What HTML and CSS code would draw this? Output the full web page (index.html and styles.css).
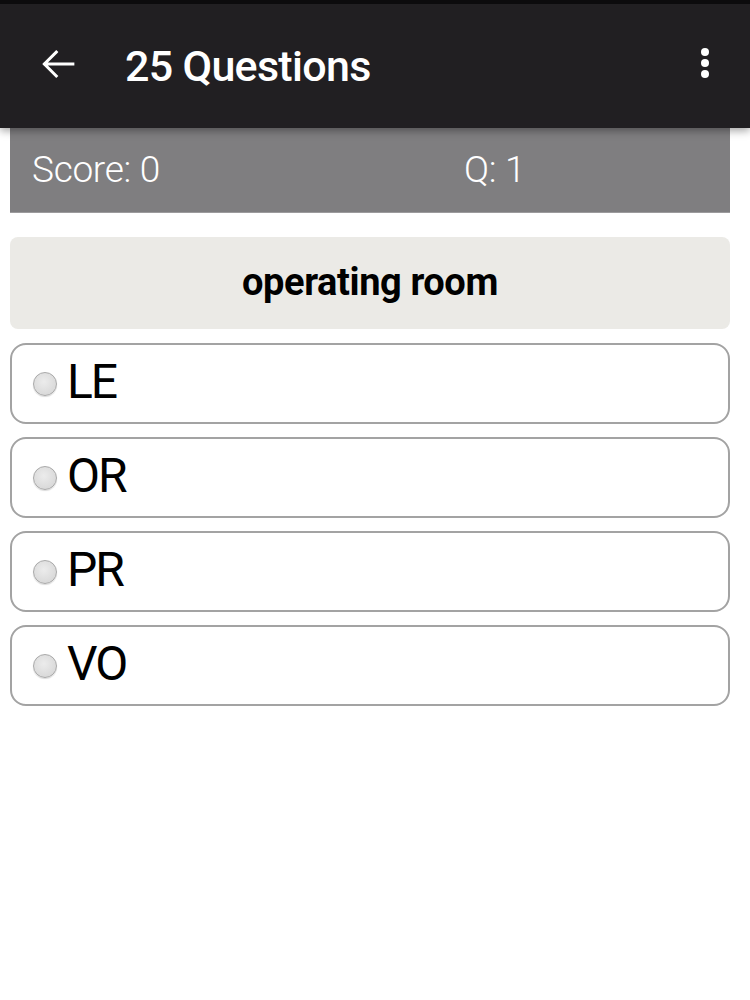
FILE: index.html
```html
<!DOCTYPE html>
<html>
  <head>
    <meta charset="UTF-8">
    <title>25 Questions</title>
    <link rel="stylesheet" href="styles.css">
  </head>
  <body>
    <div class="app-bar">
      <div class="back-btn">
        <svg width="42" height="42" viewBox="0 0 24 24">
          <path d="M20.5 12H4.5M11 5.2l-6.8 6.8 6.8 6.8" fill="none" stroke="#fff" stroke-width="1.7" stroke-linecap="square"/>
        </svg>
      </div>
      <h1 class="title">25 Questions</h1>
      <div class="menu-btn">
        <span class="dot"></span>
        <span class="dot"></span>
        <span class="dot"></span>
      </div>
    </div>

    <div class="content">
      <div class="score-bar">
        <span class="score-cell score-left">Score: 0</span>
        <span class="score-cell">Q: 1</span>
      </div>

      <div class="question">operating room</div>

      <div class="options">
        <label class="option">
          <span class="radio"></span>
          <span class="option-text">LE</span>
        </label>
        <label class="option">
          <span class="radio"></span>
          <span class="option-text">OR</span>
        </label>
        <label class="option">
          <span class="radio"></span>
          <span class="option-text">PR</span>
        </label>
        <label class="option">
          <span class="radio"></span>
          <span class="option-text">VO</span>
        </label>
      </div>
    </div>
  </body>
</html>
```

FILE: styles.css
```css
:root {
  --bar-color: #211f22;
  --score-color: #7f7e80;
  --question-bg: #ebeae6;
  --border-color: #a3a3a3;
}

body {
  margin: 0;
  background: #ffffff;
  font-family: Roboto, "Noto Sans", sans-serif;
  color: #000;
}

.app-bar {
  position: relative;
  z-index: 2;
  height: 124px;
  display: flex;
  align-items: center;
  background: var(--bar-color);
  border-top: 4px solid #0c0b0d;
  box-shadow: 0 3px 8px rgba(0, 0, 0, 0.35);
  color: #fff;
}

.back-btn {
  width: 42px;
  height: 42px;
  margin-left: 37px;
  margin-top: -4px;
}

.title {
  margin: 0 0 0 46px;
  font-size: 43px;
  font-weight: 500;
  letter-spacing: -0.7px;
  flex: 1;
}

.menu-btn {
  display: flex;
  flex-direction: column;
  align-items: center;
  gap: 3px;
  width: 20px;
  margin-right: 35px;
  margin-top: -6px;
}

.dot {
  width: 8px;
  height: 8px;
  border-radius: 50%;
  background: #fff;
}

.content {
  padding: 0 20px 0 10px;
}

.score-bar {
  display: flex;
  align-items: center;
  height: 85px;
  background: var(--score-color);
  border-bottom: 1px solid #9c9b9d;
  color: #fff;
  font-size: 37px;
  font-weight: 300;
  box-sizing: border-box;
  padding-bottom: 2px;
}

.score-cell {
  padding-left: 22px;
  letter-spacing: -0.3px;
}

.score-left {
  width: 60%;
  box-sizing: border-box;
}

.question {
  margin-top: 24px;
  height: 92px;
  display: flex;
  align-items: center;
  justify-content: center;
  background: var(--question-bg);
  border-radius: 8px;
  font-size: 38px;
  font-weight: 700;
  letter-spacing: -0.4px;
  padding-bottom: 2px;
  box-sizing: border-box;
}

.options {
  display: flex;
  flex-direction: column;
  gap: 13px;
  margin-top: 14px;
}

.option {
  display: flex;
  align-items: center;
  height: 81px;
  box-sizing: border-box;
  border: 2px solid var(--border-color);
  border-radius: 16px;
  padding-left: 21px;
}

.radio {
  width: 22px;
  height: 22px;
  border-radius: 50%;
  border: 1px solid #a9a9a9;
  background: radial-gradient(circle at 45% 40%, #ececec 0%, #dadada 70%, #cfcfcf 100%);
  box-shadow: 0 1px 1px rgba(0, 0, 0, 0.15);
  flex: none;
}

.option-text {
  margin-left: 10px;
  margin-top: -4px;
  font-size: 48px;
  letter-spacing: -2px;
}
```
